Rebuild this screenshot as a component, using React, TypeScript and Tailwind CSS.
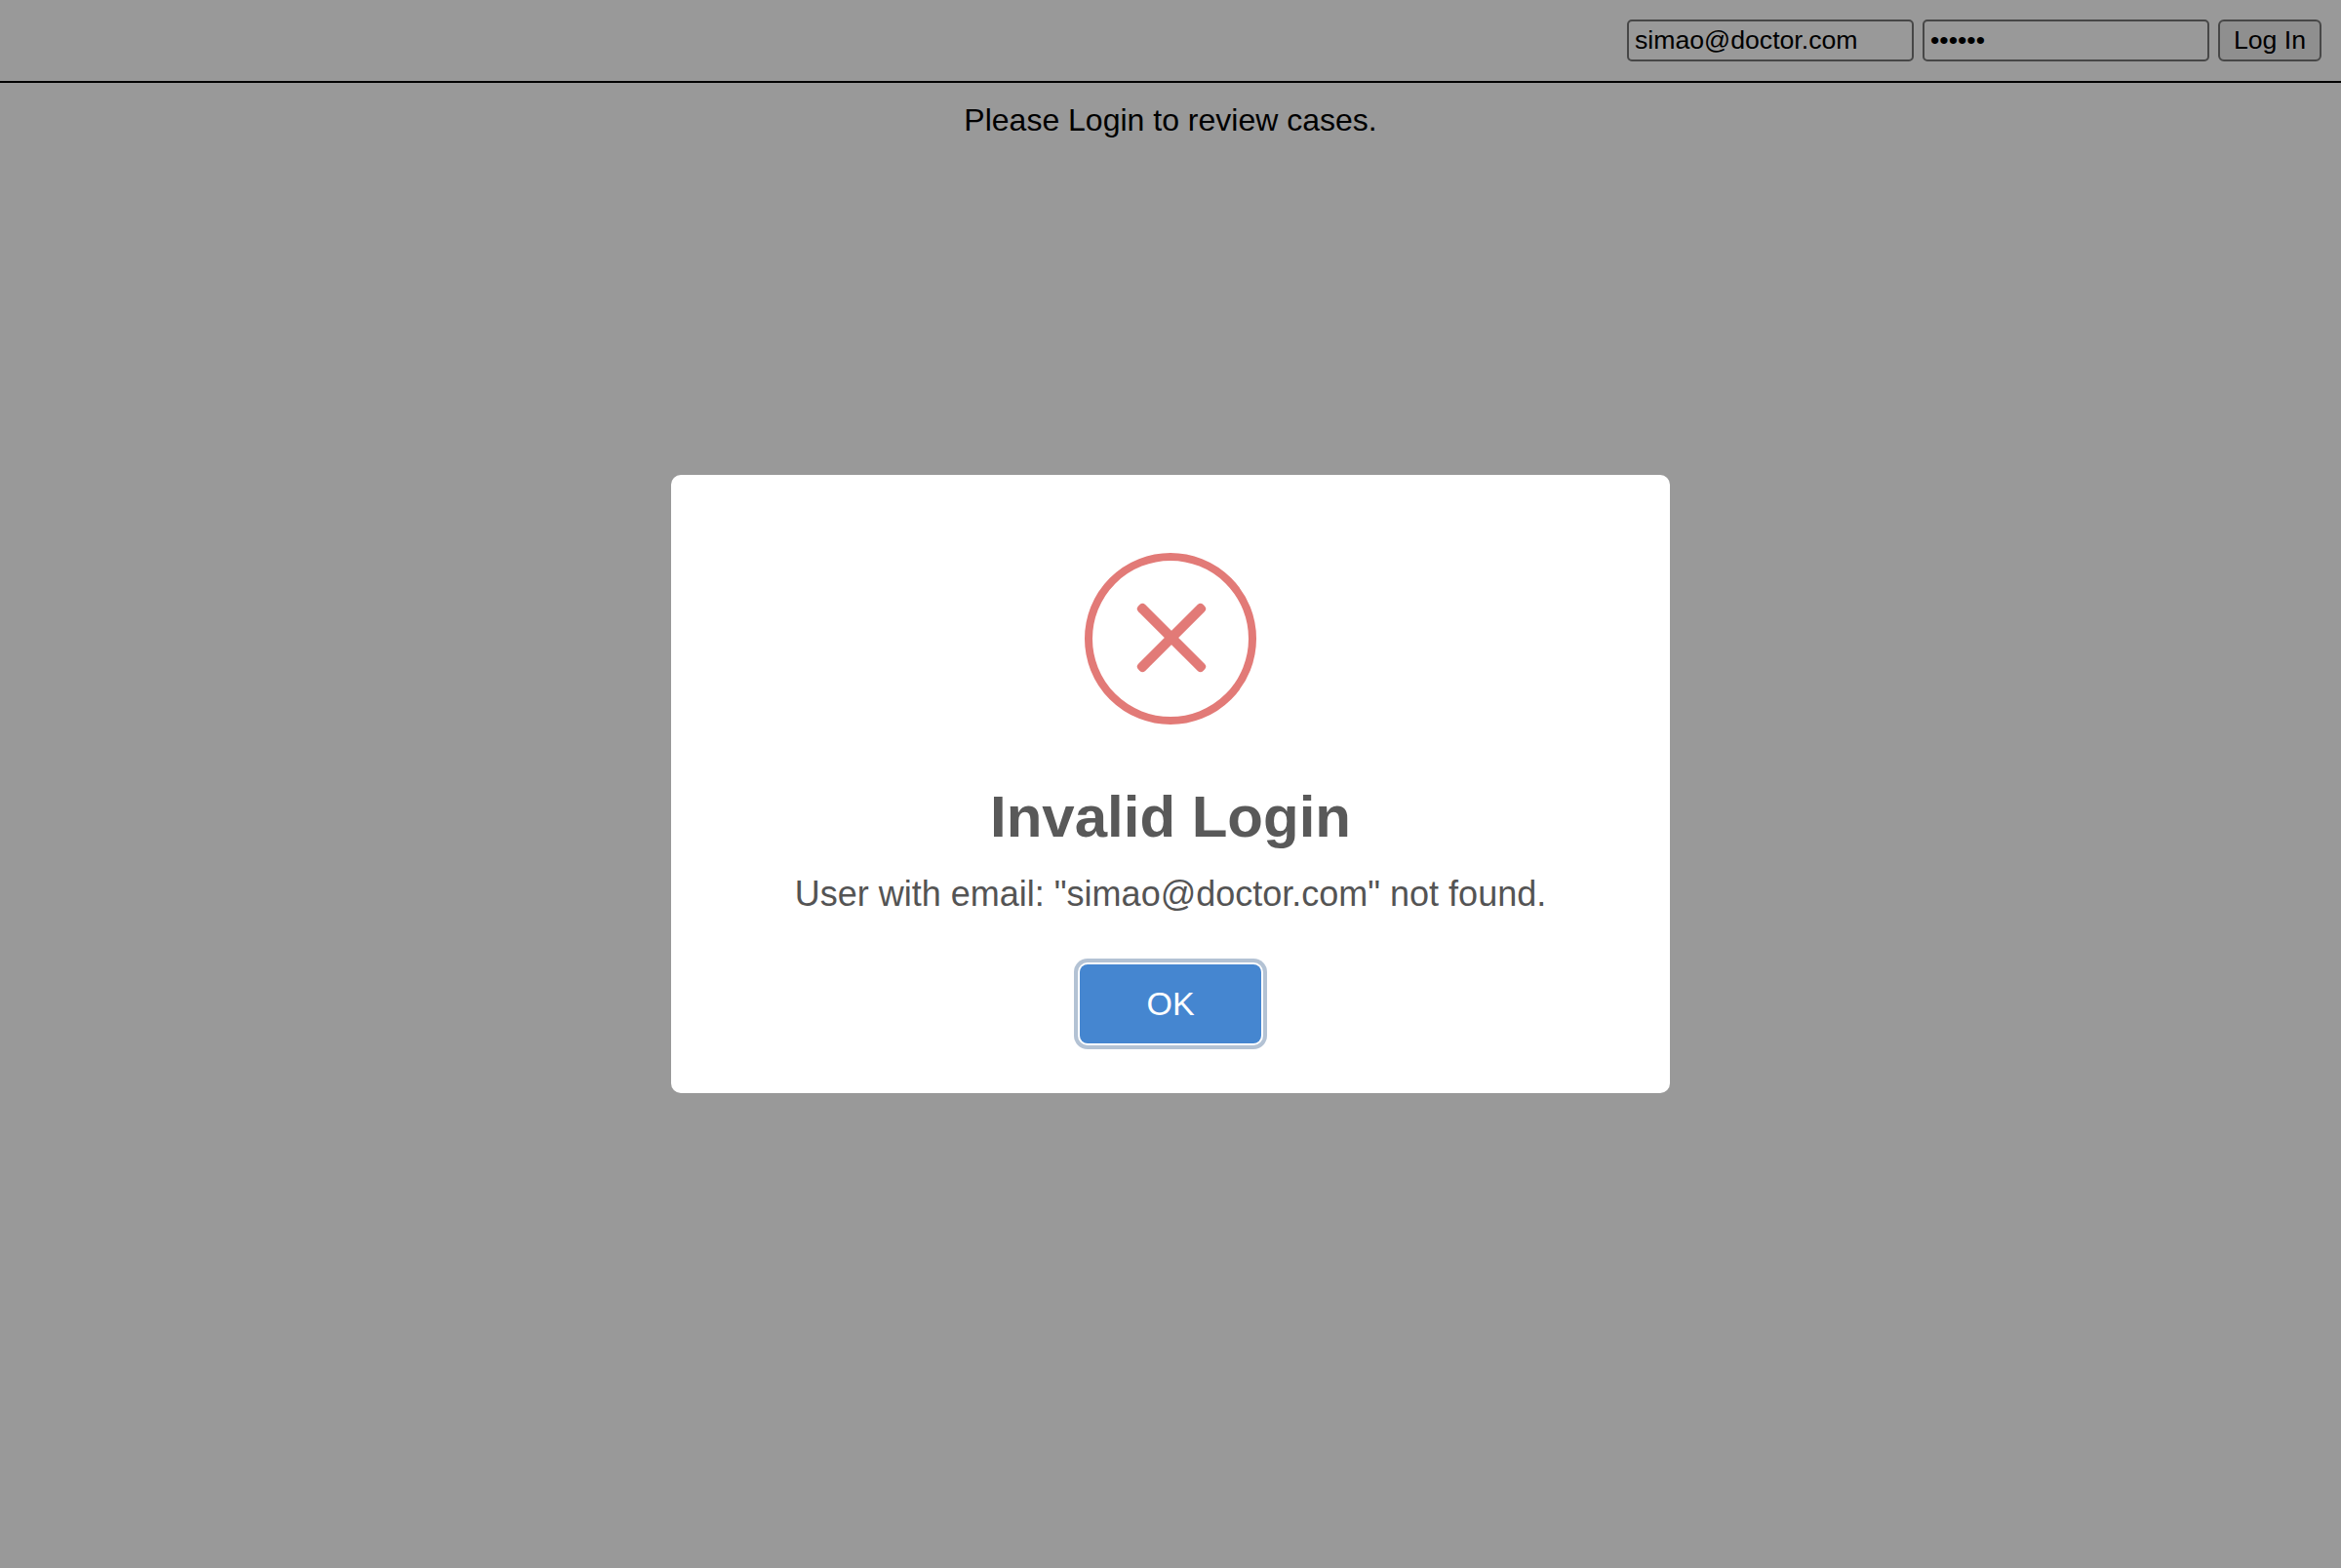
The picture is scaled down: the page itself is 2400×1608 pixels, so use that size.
function ErrorIcon() {
  return (
    <svg className="h-[176px] w-[176px]" viewBox="0 0 176 176" fill="none">
      <circle cx="88" cy="88" r="84" stroke="#e27a77" strokeWidth="8" />
      <g fill="#e27a77">
        <rect x="42" y="82" width="94" height="10" rx="4" transform="rotate(45 89 87)" />
        <rect x="42" y="82" width="94" height="10" rx="4" transform="rotate(-45 89 87)" />
      </g>
    </svg>
  );
}

const field =
  "h-[43px] w-[294px] rounded-[5px] border-2 border-[#474747] bg-transparent px-[6px] text-[26.67px] leading-[30px] text-black outline-none";

export default function App() {
  return (
    <div className="relative h-[1608px] w-[2400px] overflow-hidden bg-[#999999] font-['Liberation_Sans',Arial,sans-serif] text-black">
      <header className="flex h-[85px] items-start justify-end gap-[9px] border-b-2 border-black pt-5 pr-5">
        <input className={field} type="text" defaultValue="simao@doctor.com" />
        <input className={field} type="password" defaultValue="secret" />
        <button className="h-[43px] w-[106px] rounded-[6px] border-2 border-[#474747] bg-[#8f8f8f] pb-[2px] text-[26.67px] leading-[30px] whitespace-nowrap">
          Log In
        </button>
      </header>
      <p className="pt-5 text-center text-[32px] leading-[36px]">Please Login to review cases.</p>

      <div className="absolute inset-0 flex items-center justify-center">
        <div className="flex h-[634px] w-[1024px] flex-col items-center rounded-[10px] bg-white pt-20">
          <ErrorIcon />
          <h2 className="mt-[61px] text-[60px] leading-[68px] font-bold text-[#595959]">Invalid Login</h2>
          <p className="mt-6 text-[36px] leading-[42px] text-[#545454]">
            User with email: "simao@doctor.com" not found.
          </p>
          <button className="mt-[51px] h-[81px] w-[186px] rounded-[8px] bg-[#4586d0] pb-[2px] text-[34px] leading-[40px] text-white shadow-[0_0_0_2px_#ffffff,0_0_0_6px_#b3c2d4]">
            OK
          </button>
        </div>
      </div>
    </div>
  );
}
